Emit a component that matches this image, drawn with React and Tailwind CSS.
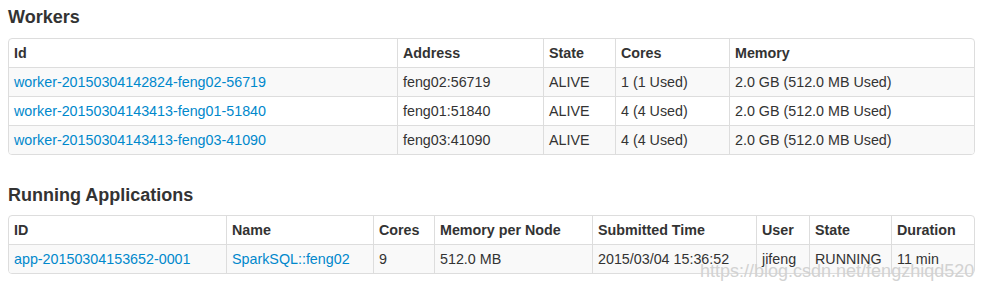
import React from "react";

const font = { fontFamily: '"Liberation Sans", Arial, Helvetica, sans-serif' };

function Table({ cols, headers, rows }) {
  return (
    <div className="w-[967px] border border-[#dddddd] rounded-[4px] overflow-hidden">
      <table className="table-fixed border-separate border-spacing-0 w-[965px] text-[14.3px] leading-[20px] text-[#333333]">
        <colgroup>
          {cols.map((w, i) => (
            <col key={i} style={{ width: w }} />
          ))}
        </colgroup>
        <thead>
          <tr>
            {headers.map((h, i) => (
              <th
                key={i}
                className={`text-left font-bold px-[5px] py-[4px] whitespace-nowrap ${i > 0 ? "border-l border-[#dddddd]" : ""}`}
              >
                {h}
              </th>
            ))}
          </tr>
        </thead>
        <tbody>
          {rows.map((r, ri) => (
            <tr key={ri} className={ri % 2 === 0 ? "bg-[#f9f9f9]" : "bg-white"}>
              {r.map((c, ci) => (
                <td
                  key={ci}
                  className={`px-[5px] py-[4px] whitespace-nowrap border-t border-[#dddddd] ${ci > 0 ? "border-l" : ""}`}
                >
                  {typeof c === "object" ? <a className="text-[#0088cc]">{c.href}</a> : c}
                </td>
              ))}
            </tr>
          ))}
        </tbody>
      </table>
    </div>
  );
}

export default function App() {
  return (
    <div className="relative w-[990px] h-[291px] bg-white px-[8px] pt-[7px]" style={font}>
      <h4 className="text-[18px] leading-[20px] font-bold text-[#333333]">Workers</h4>
      <div className="mt-[11px]">
        <Table
          cols={[388, 146, 72, 114, 245]}
          headers={["Id", "Address", "State", "Cores", "Memory"]}
          rows={[
            [{ href: "worker-20150304142824-feng02-56719" }, "feng02:56719", "ALIVE", "1 (1 Used)", "2.0 GB (512.0 MB Used)"],
            [{ href: "worker-20150304143413-feng01-51840" }, "feng01:51840", "ALIVE", "4 (4 Used)", "2.0 GB (512.0 MB Used)"],
            [{ href: "worker-20150304143413-feng03-41090" }, "feng03:41090", "ALIVE", "4 (4 Used)", "2.0 GB (512.0 MB Used)"],
          ]}
        />
      </div>
      <h4 className="mt-[30px] text-[18px] leading-[20px] font-bold text-[#333333]">Running Applications</h4>
      <div className="mt-[10px]">
        <Table
          cols={[217, 147, 61, 158, 164, 53, 82, 83]}
          headers={["ID", "Name", "Cores", "Memory per Node", "Submitted Time", "User", "State", "Duration"]}
          rows={[
            [{ href: "app-20150304153652-0001" }, { href: "SparkSQL::feng02" }, "9", "512.0 MB", "2015/03/04 15:36:52", "jifeng", "RUNNING", "11 min"],
          ]}
        />
      </div>
      <div className="absolute left-[700px] top-[261px] text-[18px] leading-[20px] text-[#d2d2d2] whitespace-nowrap">
        https://blog.csdn.net/fengzhiqd520
      </div>
    </div>
  );
}
